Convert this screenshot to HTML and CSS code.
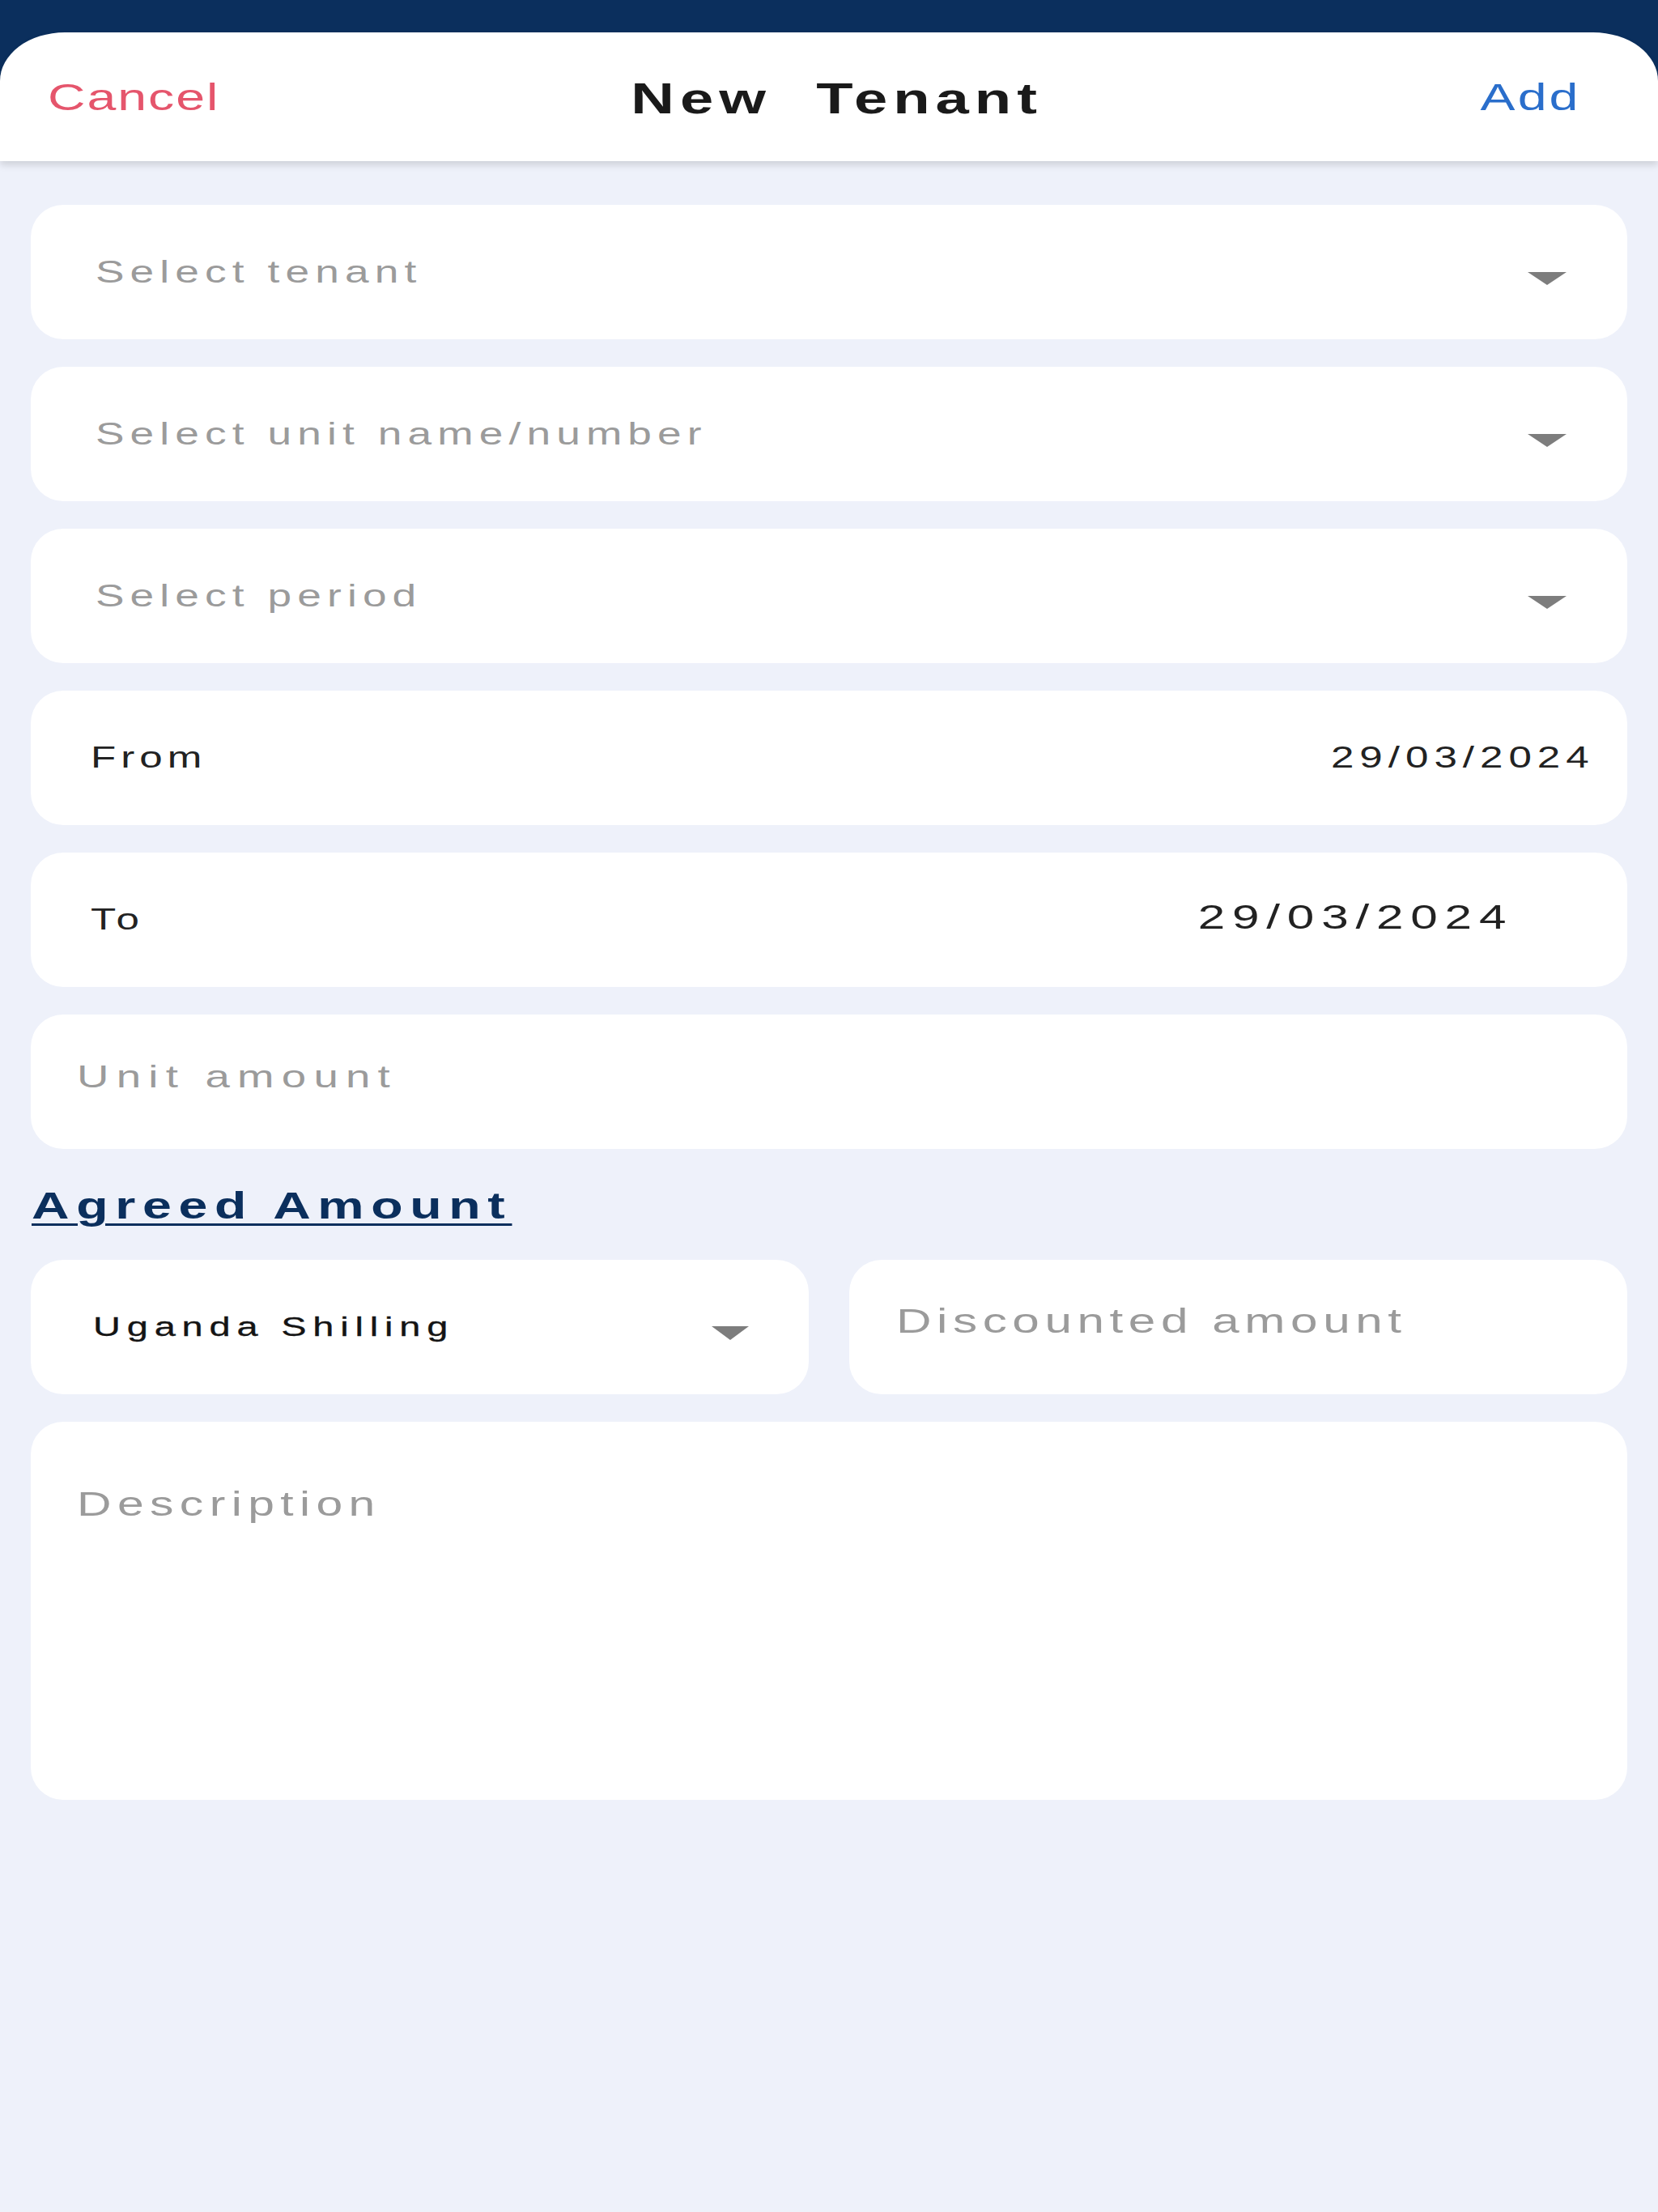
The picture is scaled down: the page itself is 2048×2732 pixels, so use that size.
FILE: index.html
```html
<!DOCTYPE html>
<html lang="en">
<head>
<meta charset="utf-8">
<title>New Tenant</title>
<link rel="stylesheet" href="styles.css">
</head>
<body>
<div class="top">
  <header class="navbar">
    <div class="nav-left"><span class="sx nav-cancel">Cancel</span></div>
    <div class="nav-center"><span class="sx nav-title">New  Tenant</span></div>
    <div class="nav-right"><span class="sx sx-right nav-add">Add</span></div>
  </header>
</div>
<main class="form">
  <div class="field field-select"><span class="sx ph ph-select">Select tenant</span><span class="caret"></span></div>
  <div class="field field-select"><span class="sx ph ph-select">Select unit name/number</span><span class="caret"></span></div>
  <div class="field field-select"><span class="sx ph ph-select">Select period</span><span class="caret"></span></div>
  <div class="field field-date field-from"><span class="sx label label-from">From</span><span class="sx sx-right date date-from">29/03/2024</span></div>
  <div class="field field-date field-to"><span class="sx label label-to">To</span><span class="sx sx-right date date-to">29/03/2024</span></div>
  <div class="field field-input"><span class="sx ph ph-unit">Unit amount</span></div>
  <h2 class="section-title"><span class="sx section-text">Agreed Amount</span></h2>
  <div class="row">
    <div class="field field-currency"><span class="sx currency">Uganda Shilling</span><span class="caret caret-small"></span></div>
    <div class="field field-discount"><span class="sx ph ph-discount">Discounted amount</span></div>
  </div>
  <div class="field field-desc"><span class="sx ph ph-desc">Description</span></div>
</main>
</body>
</html>
```

FILE: styles.css
```css
html, body {
  margin: 0;
  padding: 0;
}
body {
  background: #eef1fa;
  min-height: 2732px;
  font-family: "Liberation Sans", Arial, sans-serif;
}

/* the app's text is drawn horizontally widened */
.sx {
  display: inline-block;
  line-height: 1;
  white-space: pre;
  transform: scaleX(1.4);
  transform-origin: left center;
}
.sx-right {
  transform-origin: right center;
}

.top {
  background: #0b2f5d;
  padding-top: 40px;
  position: relative;
  z-index: 1;
}
.navbar {
  height: 159px;
  background: #ffffff;
  border-radius: 80px 80px 0 0 / 60px 60px 0 0;
  display: grid;
  grid-template-columns: 1fr auto 1fr;
  align-items: center;
  box-shadow: 0 5px 9px rgba(0, 0, 0, 0.13);
}
.nav-left {
  justify-self: start;
  padding-left: 59px;
}
.nav-center {
  padding-left: 20px;
  padding-top: 4px;
}
.nav-right {
  justify-self: end;
  padding-right: 98px;
}
.nav-cancel {
  font-size: 46px;
  color: #e5556c;
  letter-spacing: 1.4px;
}
.nav-title {
  font-size: 53px;
  font-weight: bold;
  color: #1a1a1a;
  letter-spacing: 5px;
  transform-origin: center center;
}
.nav-add {
  font-size: 46px;
  color: #2a6ecb;
  letter-spacing: 2.2px;
  margin-right: -2.2px;
}

.form {
  display: flex;
  flex-direction: column;
  gap: 34px;
  padding: 54px 38px 0;
}
.field {
  background: #ffffff;
  border-radius: 40px;
  height: 166px;
  box-sizing: border-box;
  display: flex;
  align-items: center;
}
.ph {
  color: #9b9b9b;
}
.field-select {
  padding: 0 75px 0 80px;
}
.ph-select {
  font-size: 38px;
  letter-spacing: 5.1px;
}
.caret {
  margin-left: auto;
  margin-top: 15px;
  width: 0;
  height: 0;
  border-left: 24px solid transparent;
  border-right: 24px solid transparent;
  border-top: 16px solid #7d7d7d;
}
.caret-small {
  border-left-width: 23.5px;
  border-right-width: 23.5px;
  border-top-width: 17px;
}
.field-date {
  justify-content: space-between;
}
.field-from {
  padding: 0 45px 0 74px;
}
.field-to {
  padding: 0 147px 0 74px;
}
.label, .date {
  color: #222222;
}
.label {
  font-size: 36.5px;
  letter-spacing: 4.3px;
}
.date-from {
  font-size: 36.5px;
  letter-spacing: 5px;
  margin-right: -5px;
}
.date-to {
  font-size: 43px;
  letter-spacing: 6.3px;
  margin-right: -6.3px;
  margin-top: -7px;
}
.field-input {
  padding: 0 0 14px 57px;
}
.ph-unit {
  font-size: 39px;
  letter-spacing: 6.6px;
}
.section-title {
  margin: 13px 0 10px 1px;
  font-size: 46px;
  line-height: 46px;
  font-weight: bold;
  color: #0b2f5d;
  align-self: flex-start;
}
.section-text {
  letter-spacing: 6.2px;
  margin-right: -6.2px;
  text-decoration: underline;
  text-decoration-thickness: 3px;
  text-underline-offset: 6px;
}
.row {
  display: grid;
  grid-template-columns: 1fr 1fr;
  gap: 50px;
}
.field-currency {
  padding: 0 74px 0 77px;
}
.currency {
  font-size: 33.5px;
  color: #141414;
  letter-spacing: 5.6px;
  -webkit-text-stroke: 0.3px #141414;
}
.field-discount {
  padding: 0 0 15px 58px;
}
.ph-discount {
  font-size: 43px;
  letter-spacing: 4.7px;
}
.field-desc {
  height: 467px;
  align-items: flex-start;
  padding: 81px 0 0 57px;
}
.ph-desc {
  font-size: 42px;
  letter-spacing: 5.3px;
}
```
